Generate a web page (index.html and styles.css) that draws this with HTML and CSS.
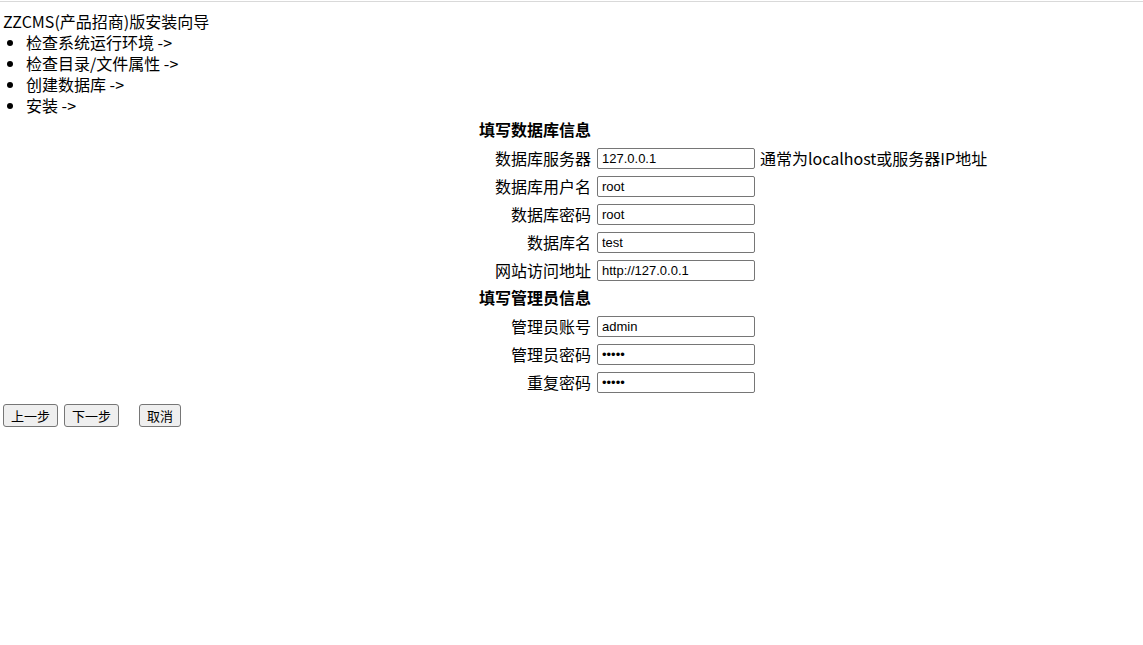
FILE: index.html
```html
<!DOCTYPE html>
<html lang="zh-CN">
<head>
<meta charset="utf-8">
<title>ZZCMS安装向导</title>
<link rel="stylesheet" href="styles.css">
</head>
<body>
<div class="page">
  <div class="title">ZZCMS(产品招商)版安装向导</div>
  <ul class="steps">
    <li>检查系统运行环境 -&gt;</li>
    <li>检查目录/文件属性 -&gt;</li>
    <li>创建数据库 -&gt;</li>
    <li>安装 -&gt;</li>
  </ul>
  <div class="form">
    <div class="row head"><span class="label">填写数据库信息</span></div>
    <div class="row"><span class="label">数据库服务器</span><input class="field" type="text" value="127.0.0.1"><span class="hint">通常为localhost或服务器IP地址</span></div>
    <div class="row"><span class="label">数据库用户名</span><input class="field" type="text" value="root"></div>
    <div class="row"><span class="label">数据库密码</span><input class="field" type="text" value="root"></div>
    <div class="row"><span class="label">数据库名</span><input class="field" type="text" value="test"></div>
    <div class="row"><span class="label">网站访问地址</span><input class="field" type="text" value="http://127.0.0.1"></div>
    <div class="row head"><span class="label">填写管理员信息</span></div>
    <div class="row"><span class="label">管理员账号</span><input class="field" type="text" value="admin"></div>
    <div class="row"><span class="label">管理员密码</span><input class="field" type="password" value="admin"></div>
    <div class="row"><span class="label">重复密码</span><input class="field" type="password" value="admin"></div>
  </div>
  <div class="buttons">
    <button class="btn" type="button">上一步</button>
    <button class="btn" type="button">下一步</button>
    <button class="btn cancel" type="button">取消</button>
  </div>
</div>
</body>
</html>
```
FILE: styles.css
```css
html, body {
  margin: 0;
  padding: 0;
  background: #fff;
}
body {
  font-family: "Noto Sans CJK SC", "Noto Sans", sans-serif;
  font-size: 16px;
  color: #000;
  line-height: 21px;
}
.page {
  border-top: 1px solid #d9d9d9;
  margin-top: 1px;
  padding: 9px 3px 0 3px;
}
.title {
  height: 21px;
}
.steps {
  margin: 0;
  padding: 0 0 0 23px;
  list-style: disc;
}
.steps li {
  height: 21px;
}
.form {
  display: flex;
  flex-direction: column;
  padding-left: 474px;
}
.row {
  display: flex;
  align-items: center;
  height: 28px;
}
.row.head {
  height: 28px;
  align-items: flex-start;
  padding-top: 3px;
  box-sizing: border-box;
}
.label {
  width: 114px;
  text-align: right;
  padding-right: 6px;
}
.head .label {
  text-align: left;
  font-weight: bold;
  padding-left: 2px;
}
.field {
  box-sizing: border-box;
  width: 158px;
  height: 21px;
  margin: 0;
  padding: 1px 4px;
  border: 1px solid #767676;
  border-radius: 2px;
  font-family: "Liberation Sans", Arial, sans-serif;
  font-size: 13px;
  color: #000;
  background: #fff;
}
.hint {
  padding-left: 5px;
}
.buttons {
  display: flex;
  gap: 6px;
  margin-top: 8px;
}
.btn {
  height: 23px;
  padding: 0 7px;
  font-family: "Noto Sans CJK SC", sans-serif;
  font-size: 13px;
  color: #000;
  background: #efefef;
  border: 1px solid #767676;
  border-radius: 3px;
}
.cancel {
  margin-left: 14px;
}
```
